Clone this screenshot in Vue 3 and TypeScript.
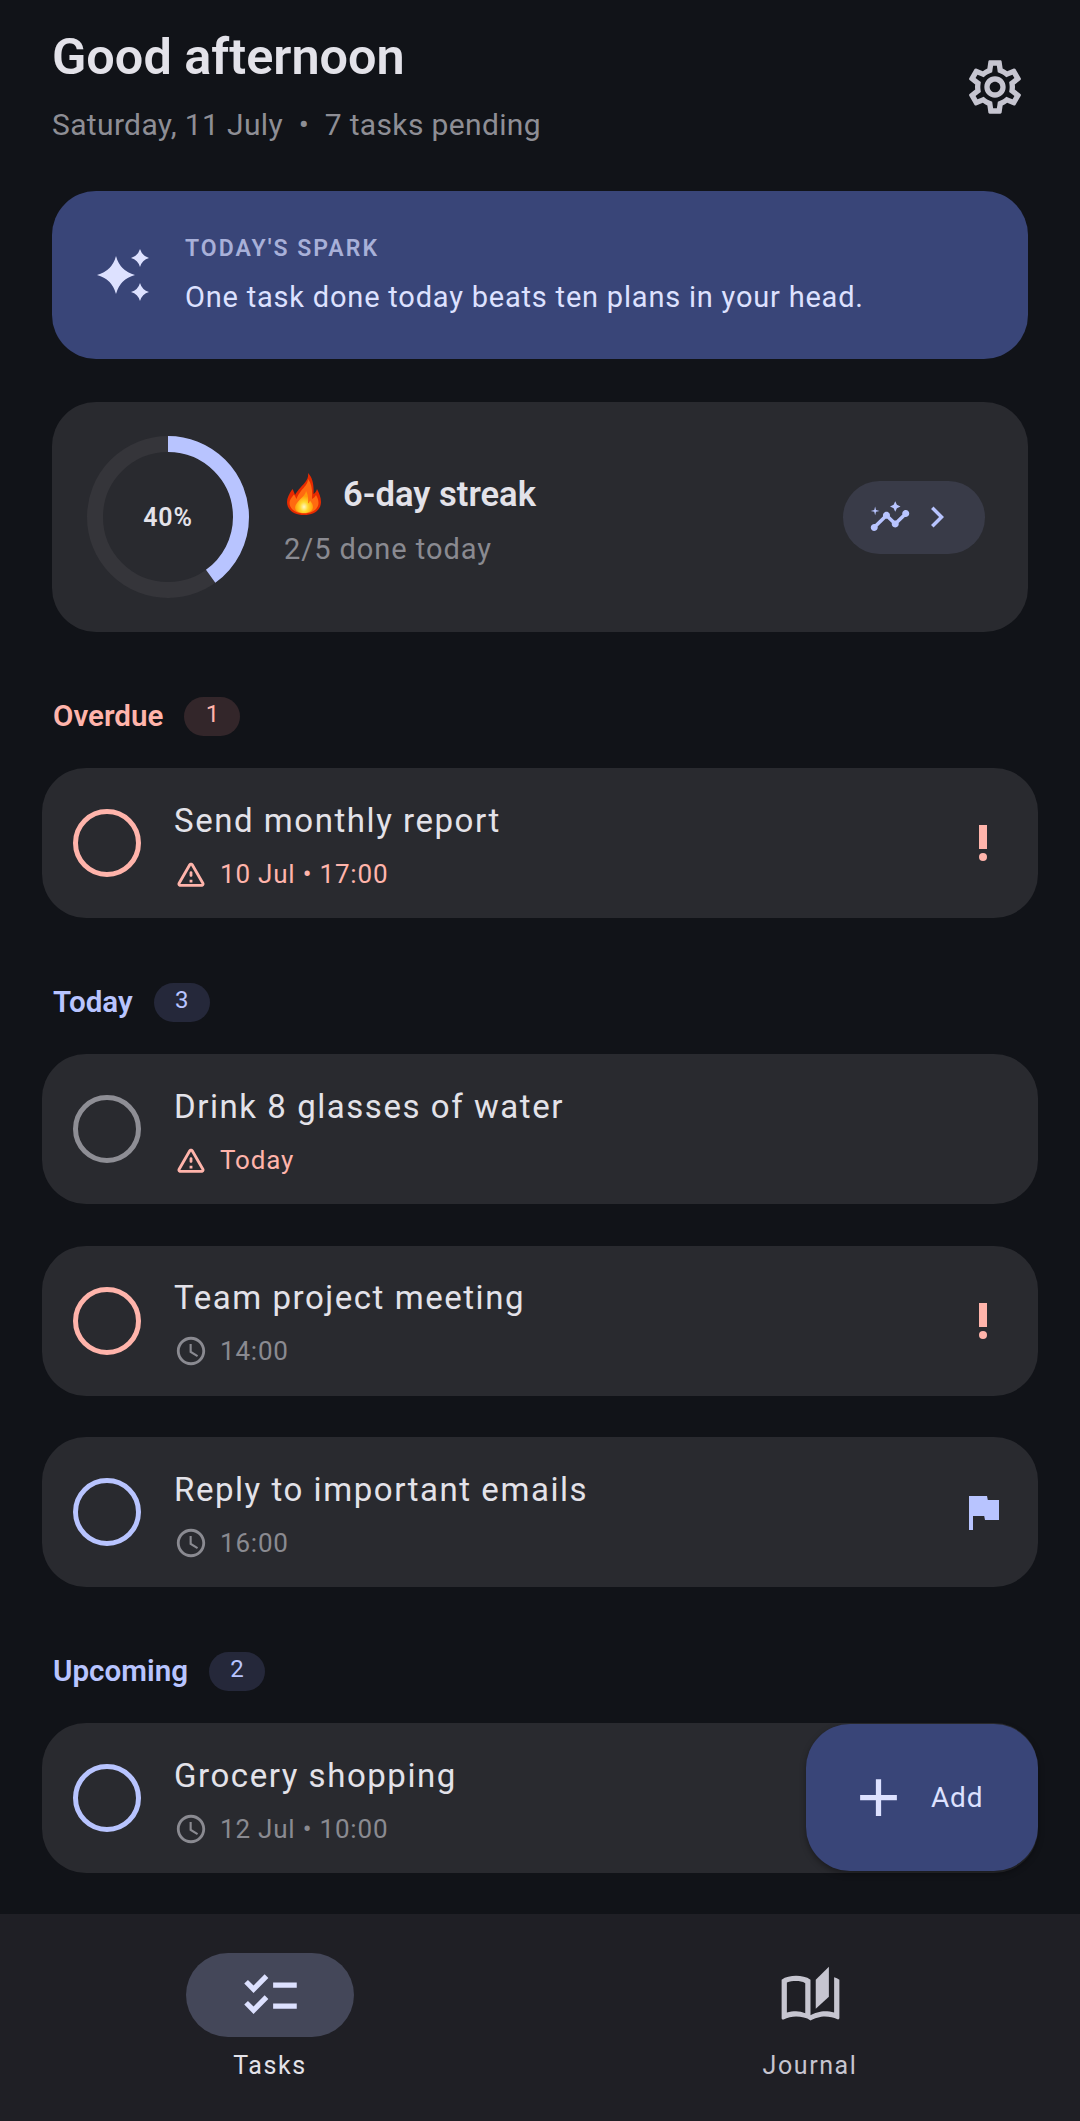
<script setup lang="ts">
interface Task {
  title: string;
  meta: string;
  metaIcon: "warn" | "clock";
  tone: "danger" | "muted" | "primary";
  trailing?: "priority" | "flag";
}

interface Section {
  name: string;
  kind: "overdue" | "today" | "upcoming";
  tasks: Task[];
}

const sections: Section[] = [
  {
    name: "Overdue",
    kind: "overdue",
    tasks: [
      { title: "Send monthly report", meta: "10 Jul • 17:00", metaIcon: "warn", tone: "danger", trailing: "priority" },
    ],
  },
  {
    name: "Today",
    kind: "today",
    tasks: [
      { title: "Drink 8 glasses of water", meta: "Today", metaIcon: "warn", tone: "muted" },
      { title: "Team project meeting", meta: "14:00", metaIcon: "clock", tone: "danger", trailing: "priority" },
      { title: "Reply to important emails", meta: "16:00", metaIcon: "clock", tone: "primary", trailing: "flag" },
    ],
  },
  {
    name: "Upcoming",
    kind: "upcoming",
    tasks: [{ title: "Grocery shopping", meta: "12 Jul • 10:00", metaIcon: "clock", tone: "primary" }],
  },
];

const badgeCounts: Record<string, number> = { Overdue: 1, Today: 3, Upcoming: 2 };

const ringRadius = 73;
const ringLength = 2 * Math.PI * ringRadius;
const ringDash = `${ringLength * 0.4} ${ringLength}`;
</script>

<template>
  <div class="screen">
    <main class="content">
      <header class="top">
        <div>
          <h1 class="greeting">Good afternoon</h1>
          <p class="date">Saturday, 11 July &nbsp;•&nbsp; 7 tasks pending</p>
        </div>
        <svg class="gear" viewBox="0 0 24 24" fill="currentColor">
          <path d="M19.43 12.98c.04-.32.07-.64.07-.98 0-.34-.03-.66-.07-.98l2.11-1.65c.19-.15.24-.42.12-.64l-2-3.46c-.09-.16-.26-.25-.44-.25-.06 0-.12.01-.17.03l-2.49 1c-.52-.4-1.08-.73-1.69-.98l-.38-2.65C14.46 2.18 14.25 2 14 2h-4c-.25 0-.46.18-.49.42l-.38 2.65c-.61.25-1.17.59-1.69.98l-2.49-1c-.06-.02-.12-.03-.18-.03-.17 0-.34.09-.43.25l-2 3.46c-.13.22-.07.49.12.64l2.11 1.65c-.04.32-.07.65-.07.98 0 .33.03.66.07.98l-2.11 1.65c-.19.15-.24.42-.12.64l2 3.46c.09.16.26.25.44.25.06 0 .12-.01.17-.03l2.49-1c.52.4 1.08.73 1.69.98l.38 2.65c.03.24.24.42.49.42h4c.25 0 .46-.18.49-.42l.38-2.65c.61-.25 1.17-.59 1.69-.98l2.49 1c.06.02.12.03.18.03.17 0 .34-.09.43-.25l2-3.46c.12-.22.07-.49-.12-.64l-2.11-1.65zm-1.98-1.71c.04.31.05.52.05.73 0 .21-.02.43-.05.73l-.14 1.13.89.7 1.08.84-.7 1.21-1.27-.51-1.04-.42-.9.68c-.43.32-.84.56-1.25.73l-1.06.43-.16 1.13-.2 1.35h-1.4l-.19-1.35-.16-1.13-1.06-.43c-.43-.18-.83-.41-1.23-.71l-.91-.7-1.06.43-1.27.51-.7-1.21 1.08-.84.89-.7-.14-1.13c-.03-.31-.05-.54-.05-.74s.02-.43.05-.73l.14-1.13-.89-.7-1.08-.84.7-1.21 1.27.51 1.04.42.9-.68c.43-.32.84-.56 1.25-.73l1.06-.43.16-1.13.2-1.35h1.39l.19 1.35.16 1.13 1.06.43c.43.18.83.41 1.23.71l.91.7 1.06-.43 1.27-.51.7 1.21-1.07.85-.89.7.14 1.13zM12 8c-2.21 0-4 1.79-4 4s1.79 4 4 4 4-1.79 4-4-1.79-4-4-4zm0 6c-1.1 0-2-.9-2-2s.9-2 2-2 2 .9 2 2-.9 2-2 2z" />
        </svg>
      </header>

      <section class="spark">
        <svg class="spark-icon" viewBox="0 0 54 54" fill="currentColor">
          <path d="M20 8Q24 23 39 27Q24 31 20 46Q16 31 1 27Q16 23 20 8Z" />
          <path d="M44 1Q46 8 53 10Q46 12 44 19Q42 12 35 10Q42 8 44 1Z" />
          <path d="M44 35Q46 42 53 44Q46 46 44 53Q42 46 35 44Q42 42 44 35Z" />
        </svg>
        <div>
          <div class="spark-label">TODAY'S SPARK</div>
          <div class="spark-text">One task done today beats ten plans in your head.</div>
        </div>
      </section>

      <section class="streak">
        <div class="ring">
          <svg viewBox="0 0 162 162" width="162" height="162">
            <circle cx="81" cy="81" :r="ringRadius" fill="none" stroke="#35353a" stroke-width="16" />
            <circle
              cx="81"
              cy="81"
              :r="ringRadius"
              fill="none"
              stroke="#b8c4ff"
              stroke-width="16"
              :stroke-dasharray="ringDash"
              transform="rotate(-90 81 81)"
            />
          </svg>
          <span class="ring-value">40%</span>
        </div>
        <div class="streak-body">
          <div class="streak-title">
            <svg class="flame" viewBox="0 0 34 42">
              <defs>
                <radialGradient id="flameCore" cx="50%" cy="72%" r="50%">
                  <stop offset="0%" stop-color="#fff6c8" />
                  <stop offset="45%" stop-color="#ffd92e" />
                  <stop offset="100%" stop-color="#ff9a0a" />
                </radialGradient>
              </defs>
              <path fill="#e62a00" d="M21 0C22 6 18 10 14 14C11 17 9 20 8 22C7 19 6.5 18 5.5 16C2 21 0 25 0 29C0 37 7 42 17 42C27 42 34 37 34 29C34 24 32 20 30 16C29 19 28 20 26.5 21C27 13 26 5 21 0Z" />
              <path fill="#ff6a10" d="M21 6C21 11 17 14 14 18C12 20.5 10.5 23 9.5 26C8.5 24 8 23 7 21.5C4 25 2.5 27 2.5 30C2.5 36 9 40.5 17 40.5C25 40.5 31.5 36 31.5 30C31.5 27 30.5 24.5 29 22C28 24 26.5 25 25 26C25.5 18 25 11 21 6Z" />
              <path fill="url(#flameCore)" d="M19 18C18.5 22 15 24 12.5 27C10 30 8 32 8 34.5C8 38 12 40 17 40C22 40 26 38 26 34C26 31 24.5 29.5 23 27.5C22.5 29 22 30 21 30.5C21.5 26 21 21 19 18Z" />
            </svg>
            <span>6-day streak</span>
          </div>
          <div class="streak-sub">2/5 done today</div>
        </div>
        <div class="insights">
          <svg class="insights-icon" viewBox="0 0 24 24" fill="currentColor">
            <path d="M21 8c-1.45 0-2.26 1.44-1.93 2.51l-3.55 3.56c-.3-.09-.74-.09-1.04 0l-2.55-2.55C12.27 10.45 11.46 9 10 9c-1.45 0-2.27 1.44-1.93 2.52l-4.56 4.55C2.44 15.74 1 16.55 1 18c0 1.1.9 2 2 2 1.45 0 2.26-1.44 1.93-2.51l4.55-4.56c.3.09.74.09 1.04 0l2.55 2.55C12.73 16.55 13.54 18 15 18c1.45 0 2.27-1.44 1.93-2.52l3.56-3.55c1.07.33 2.51-.48 2.51-1.93 0-1.1-.9-2-2-2z" />
            <path d="M15 9l.94-2.07L18 6l-2.06-.93L15 3l-.92 2.07L12 6l2.08.93z" />
            <path d="M3.5 11 4 9l2-.5L4 8l-.5-2L3 8l-2 .5L3 9z" />
          </svg>
          <svg class="insights-icon" viewBox="0 0 24 24" fill="currentColor">
            <path d="M10 6 8.59 7.41 13.17 12l-4.58 4.59L10 18l6-6z" />
          </svg>
        </div>
      </section>

      <section v-for="section in sections" :key="section.name" class="group">
        <div class="group-head" :class="section.kind">
          <span class="group-name">{{ section.name }}</span>
          <span class="group-count">{{ badgeCounts[section.name] }}</span>
        </div>
        <article v-for="task in section.tasks" :key="task.title" class="task">
          <span class="check" :class="task.tone"></span>
          <div class="task-body">
            <div class="task-title">{{ task.title }}</div>
            <div class="task-meta" :class="{ late: task.metaIcon === 'warn' }">
              <svg v-if="task.metaIcon === 'warn'" class="meta-icon" viewBox="0 0 24 24" fill="currentColor">
                <path fill-rule="evenodd" d="M12 5.99 19.53 19H4.47L12 5.99M2.74 18c-.77 1.33.19 3 1.73 3h15.06c1.54 0 2.5-1.67 1.73-3L13.73 4.99c-.77-1.33-2.69-1.33-3.46 0L2.74 18zM11 11v2c0 .55.45 1 1 1s1-.45 1-1v-2c0-.55-.45-1-1-1s-1 .45-1 1zm0 5h2v2h-2z" />
              </svg>
              <svg v-else class="meta-icon" viewBox="0 0 24 24" fill="currentColor">
                <path d="M11.99 2C6.47 2 2 6.48 2 12s4.47 10 9.99 10C17.52 22 22 17.52 22 12S17.52 2 11.99 2zM12 20c-4.42 0-8-3.58-8-8s3.58-8 8-8 8 3.58 8 8-3.58 8-8 8zm.5-13H11v6l5.25 3.15.75-1.23-4.5-2.67z" />
              </svg>
              <span>{{ task.meta }}</span>
            </div>
          </div>
          <svg v-if="task.trailing === 'priority'" class="trailing danger-icon" viewBox="0 0 24 24" fill="currentColor">
            <circle cx="12" cy="19" r="2" />
            <path d="M10 3h4v12h-4z" />
          </svg>
          <svg v-else-if="task.trailing === 'flag'" class="trailing flag-icon" viewBox="0 0 24 24" fill="currentColor">
            <path d="M14.4 6 14 4H5v17h2v-7h5.6l.4 2h7V6z" />
          </svg>
        </article>
      </section>

      <button class="fab" type="button">
        <svg class="fab-icon" viewBox="0 0 24 24" fill="currentColor">
          <path d="M19 13h-6v6h-2v-6H5v-2h6V5h2v6h6v2z" />
        </svg>
        <span>Add</span>
      </button>
    </main>

    <nav class="nav">
      <div class="nav-item active">
        <span class="nav-pill">
          <svg class="nav-icon" viewBox="0 0 24 24" fill="currentColor">
            <path d="M22 7h-9v2h9V7zm0 8h-9v2h9v-2zM5.54 11 2 7.46l1.41-1.41 2.12 2.12 4.24-4.24 1.41 1.41L5.54 11zm0 8L2 15.46l1.41-1.41 2.12 2.12 4.24-4.24 1.41 1.41L5.54 19z" />
          </svg>
        </span>
        <span class="nav-label">Tasks</span>
      </div>
      <div class="nav-item">
        <span class="nav-pill">
          <svg class="nav-icon" viewBox="0 0 24 24" fill="currentColor">
            <path d="M19 1l-5 5v11l5-4.5V1z" />
            <path fill-rule="evenodd" d="M21 5v13.5c-1.1-.35-2.3-.5-3.5-.5-1.7 0-4.15.65-5.5 1.5V6c-1.45-1.1-3.55-1.5-5.5-1.5S2.45 4.9 1 6v14.65c0 .25.25.5.5.5.1 0 .15-.05.25-.05C3.1 20.45 5.05 20 6.5 20c1.95 0 4.05.4 5.5 1.5 1.35-.85 3.8-1.5 5.5-1.5 1.65 0 3.35.3 4.75 1.05.1.05.15.05.25.05.25 0 .5-.25.5-.5V6c-.6-.45-1.25-.75-2-1zM3 18.5V7c1.1-.4 2.3-.5 3.5-.5s2.5.2 3.5.8v11.5c-1.1-.5-2.3-.8-3.5-.8s-2.4.15-3.5.5z" />
          </svg>
        </span>
        <span class="nav-label">Journal</span>
      </div>
    </nav>
  </div>
</template>

<style scoped>
.screen {
  width: 1080px;
  height: 2121px;
  overflow: hidden;
  display: flex;
  flex-direction: column;
  background: #111318;
  color: #e3e2e9;
  font-family: Roboto, "Noto Sans", sans-serif;
}

.content {
  position: relative;
  flex: 1;
  min-height: 0;
  padding: 21px 42px 0;
}

.top {
  display: flex;
  justify-content: space-between;
  align-items: center;
  padding: 0 10px;
  height: 131px;
}

.greeting {
  margin: 0;
  font-size: 50.4px;
  line-height: 56px;
  font-weight: 600;
  color: #e3e2e9;
}

.date {
  margin: 20px 0 0;
  font-size: 30px;
  line-height: 40px;
  letter-spacing: 0.35px;
  font-weight: 380;
  color: #8e8e95;
}

.gear {
  width: 64px;
  height: 64px;
  margin-right: 1px;
  color: #c6c5d0;
}

.spark {
  margin: 39px 10px 0;
  height: 168px;
  border-radius: 44px;
  background: #394578;
  display: flex;
  align-items: center;
  padding-left: 44px;
  gap: 35px;
  color: #dde1ff;
}

.spark-icon {
  width: 54px;
  height: 54px;
  flex: none;
}

.spark-label {
  font-size: 23px;
  line-height: 30px;
  font-weight: 600;
  letter-spacing: 2.03px;
  color: #a8b0d8;
}

.spark-text {
  margin-top: 14px;
  font-size: 29px;
  line-height: 38px;
  letter-spacing: 0.8px;
  font-weight: 380;
}

.streak {
  margin: 43px 10px 0;
  height: 230px;
  border-radius: 44px;
  background: #292a2f;
  display: flex;
  align-items: center;
  padding: 0 43px 0 35px;
}

.ring {
  position: relative;
  width: 162px;
  height: 162px;
  flex: none;
}

.ring svg {
  display: block;
}

.ring-value {
  position: absolute;
  inset: 0;
  display: flex;
  align-items: center;
  justify-content: center;
  font-size: 25px;
  font-weight: 600;
  letter-spacing: 0.8px;
}

.streak-body {
  flex: 1;
  padding: 5px 0 0 35px;
}

.streak-title {
  display: flex;
  align-items: center;
  font-size: 34.6px;
  line-height: 44px;
  font-weight: 600;
  color: #e3e2e9;
}

.flame {
  width: 34px;
  height: 42px;
  margin: 0 22px 0 3px;
  flex: none;
}

.streak-sub {
  margin-top: 14px;
  font-size: 29px;
  line-height: 38px;
  letter-spacing: 0.95px;
  font-weight: 380;
  color: #8a8a91;
}

.insights {
  box-sizing: border-box;
  height: 73px;
  width: 142px;
  border-radius: 37px;
  background: #393b48;
  display: flex;
  align-items: center;
  padding-left: 26px;
  gap: 5px;
  color: #b8c4ff;
  flex: none;
}

.insights-icon {
  width: 42px;
  height: 42px;
  flex: none;
}

.group {
  margin-top: 64px;
}

.group-head {
  height: 40px;
  display: flex;
  align-items: center;
  padding-left: 11px;
  margin-bottom: 32px;
}

.group-name {
  font-size: 29.6px;
  font-weight: 600;
}

.group-count {
  margin-left: 21px;
  height: 39px;
  width: 56px;
  border-radius: 20px;
  display: flex;
  align-items: center;
  justify-content: center;
  font-size: 24px;
  font-weight: 380;
  padding-bottom: 4px;
  box-sizing: border-box;
}

.overdue { color: #ffb4ab; }
.overdue .group-count { background: #33262a; }
.today, .upcoming { color: #b8c4ff; }
.today .group-count, .upcoming .group-count { background: #25283a; }

.task {
  height: 150px;
  margin-bottom: 41.7px;
  border-radius: 44px;
  background: #292a2f;
  display: flex;
  align-items: center;
  padding: 0 31px;
}

.group:last-of-type .task {
  margin-bottom: 0;
}

.check {
  width: 68px;
  height: 68px;
  box-sizing: border-box;
  border-radius: 50%;
  border: 5px solid;
  flex: none;
}

.check.danger { border-color: #ffb4ab; }
.check.muted { border-color: #8e8e95; }
.check.primary { border-color: #b8c4ff; }

.task-body {
  flex: 1;
  padding: 4px 0 0 33px;
}

.task-title {
  font-size: 33px;
  line-height: 44px;
  letter-spacing: 1.55px;
  font-weight: 380;
  color: #e3e2e9;
}

.task-meta {
  margin-top: 13px;
  display: flex;
  align-items: center;
  font-size: 26px;
  line-height: 36px;
  letter-spacing: 0.8px;
  font-weight: 380;
  color: #8a8a91;
}

.task-meta.late {
  color: #ffb4ab;
}

.meta-icon {
  width: 34px;
  height: 34px;
  margin-right: 12px;
  flex: none;
}

.trailing {
  width: 48px;
  height: 48px;
  flex: none;
}

.danger-icon { color: #ffb4ab; }
.flag-icon { color: #b8c4ff; }

.fab {
  position: absolute;
  right: 42px;
  bottom: 43px;
  width: 232px;
  height: 147px;
  border: 0;
  border-radius: 44px;
  background: #394578;
  color: #dde1ff;
  display: flex;
  align-items: center;
  padding: 0 0 0 41px;
  font-family: inherit;
  font-size: 28px;
  font-weight: 400;
  letter-spacing: 0.8px;
  box-shadow: 0 3px 6px rgba(0, 0, 0, 0.35);
}

.fab-icon {
  width: 63px;
  height: 63px;
  margin-right: 21px;
  flex: none;
}

.nav {
  flex: none;
  height: 207px;
  background: #1f1f25;
  display: grid;
  grid-template-columns: 1fr 1fr;
}

.nav-item {
  display: flex;
  flex-direction: column;
  align-items: center;
  padding-top: 39px;
  color: #c6c5d0;
}

.nav-pill {
  width: 168px;
  height: 84px;
  border-radius: 42px;
  display: flex;
  align-items: center;
  justify-content: center;
}

.active .nav-pill {
  background: #444759;
  color: #dde1ff;
}

.nav-icon {
  width: 63px;
  height: 63px;
}

.nav-label {
  margin-top: 12px;
  font-size: 25px;
  line-height: 34px;
  font-weight: 400;
  letter-spacing: 1.6px;
}

.active .nav-label {
  color: #e3e2e9;
}
</style>

<style>
html,
body {
  background: #111318;
}
</style>
